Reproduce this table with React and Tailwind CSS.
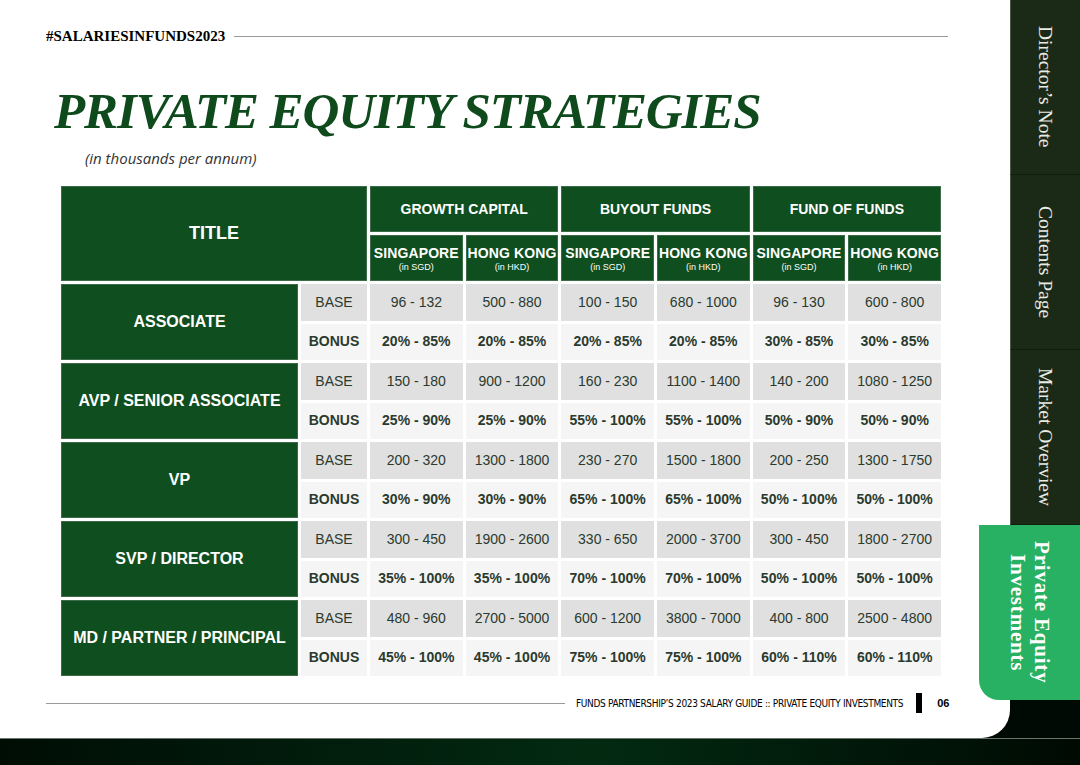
import React from "react";

const groups = [
  {
    name: "ASSOCIATE",
    base: ["96 - 132", "500 - 880", "100 - 150", "680 - 1000", "96 - 130", "600 - 800"],
    bonus: ["20% - 85%", "20% - 85%", "20% - 85%", "20% - 85%", "30% - 85%", "30% - 85%"],
  },
  {
    name: "AVP / SENIOR ASSOCIATE",
    base: ["150 - 180", "900 - 1200", "160 - 230", "1100 - 1400", "140 - 200", "1080 - 1250"],
    bonus: ["25% - 90%", "25% - 90%", "55% - 100%", "55% - 100%", "50% - 90%", "50% - 90%"],
  },
  {
    name: "VP",
    base: ["200 - 320", "1300 - 1800", "230 - 270", "1500 - 1800", "200 - 250", "1300 - 1750"],
    bonus: ["30% - 90%", "30% - 90%", "65% - 100%", "65% - 100%", "50% - 100%", "50% - 100%"],
  },
  {
    name: "SVP / DIRECTOR",
    base: ["300 - 450", "1900 - 2600", "330 - 650", "2000 - 3700", "300 - 450", "1800 - 2700"],
    bonus: ["35% - 100%", "35% - 100%", "70% - 100%", "70% - 100%", "50% - 100%", "50% - 100%"],
  },
  {
    name: "MD / PARTNER / PRINCIPAL",
    base: ["480 - 960", "2700 - 5000", "600 - 1200", "3800 - 7000", "400 - 800", "2500 - 4800"],
    bonus: ["45% - 100%", "45% - 100%", "75% - 100%", "75% - 100%", "60% - 110%", "60% - 110%"],
  },
];

const funds = ["GROWTH CAPITAL", "BUYOUT FUNDS", "FUND OF FUNDS"];

const green = "bg-[#0f4e1e] text-white font-bold flex items-center justify-center text-center border border-[#3c6c47]";

function SubHead({ city, cur }) {
  return (
    <div className={green + " flex-col leading-none"}>
      <span className="text-[14px] tracking-[0.1px] mt-[2px]">{city}</span>
      <span className="text-[9px] font-normal mt-[3px]">{cur}</span>
    </div>
  );
}

function Table() {
  return (
    <div
      className="ml-[15px] mt-[18px] w-[880px] grid grid-cols-[237px_66px_repeat(6,minmax(0,1fr))] grid-rows-[46px_46px_repeat(10,36.5px)] gap-[3px] text-[#2b3a2e]"
      style={{ fontFamily: '"Liberation Sans", Arial, sans-serif' }}
    >
      <div className={green + " col-span-2 row-span-2 text-[18px]"}>TITLE</div>
      {funds.map((f) => (
        <div key={f} className={green + " col-span-2 text-[14px]"}>
          {f}
        </div>
      ))}
      {funds.map((f) => (
        <React.Fragment key={f + "s"}>
          <SubHead city="SINGAPORE" cur="(in SGD)" />
          <SubHead city="HONG KONG" cur="(in HKD)" />
        </React.Fragment>
      ))}
      {groups.map((g) => (
        <React.Fragment key={g.name}>
          <div className={green + " row-span-2 text-[16px]"}>{g.name}</div>
          <div className="bg-[#e0e0e0] flex items-center justify-center text-[14px]">BASE</div>
          {g.base.map((v, i) => (
            <div key={"b" + i} className="bg-[#e0e0e0] flex items-center justify-center text-[14px]">
              {v}
            </div>
          ))}
          <div className="bg-[#f5f5f5] flex items-center justify-center text-[14px] font-bold">BONUS</div>
          {g.bonus.map((v, i) => (
            <div key={"n" + i} className="bg-[#f5f5f5] flex items-center justify-center text-[14px] font-bold">
              {v}
            </div>
          ))}
        </React.Fragment>
      ))}
    </div>
  );
}

function Tab({ children }) {
  return (
    <div className="h-[175px] shrink-0 bg-[#1b2a17] border-b border-[#121d10] border-l border-l-[#4b5a48] flex items-center justify-center">
      <span
        className="[writing-mode:vertical-rl] text-[19.5px] text-[#e8ebe6] leading-none"
        style={{ fontFamily: '"Liberation Serif", "Times New Roman", serif' }}
      >
        {children}
      </span>
    </div>
  );
}

export default function App() {
  return (
    <div className="w-[1080px] h-[765px] bg-[#000a04] flex flex-col overflow-hidden">
      <div className="flex h-[738px] shrink-0">
        <main className="w-[1010px] shrink-0 bg-white rounded-br-[28px] flex flex-col pl-[46px] pr-[62px] pt-[28px]">
          <div className="flex items-center gap-[9px]">
            <span
              className="text-[15px] font-bold text-black leading-[17px] whitespace-nowrap"
              style={{ fontFamily: '"Liberation Serif", "Times New Roman", serif' }}
            >
              #SALARIESINFUNDS2023
            </span>
            <div className="flex-1 h-px bg-[#9a9a9a]" />
          </div>
          <h1
            className="ml-[8px] mt-[41px] text-[51px] leading-[50px] font-bold italic text-[#0f4a1d] tracking-[-1.1px] whitespace-nowrap"
            style={{ fontFamily: '"Liberation Serif", "Times New Roman", serif' }}
          >
            PRIVATE EQUITY STRATEGIES
          </h1>
          <p
            className="ml-[39px] mt-[12px] text-[15px] leading-[20px] italic text-[#333]"
            style={{ fontFamily: '"Open Sans", sans-serif' }}
          >
            (in thousands per annum)
          </p>
          <Table />
          <div className="mt-auto mb-[25px] h-[20px] flex items-center">
            <div className="w-[519px] shrink-0 h-px bg-[#9a9a9a]" />
            <span
              className="ml-[11px] shrink-0 text-[10px] text-black whitespace-nowrap tracking-[-0.33px]"
              style={{ fontFamily: '"Liberation Sans Narrow", "DejaVu Sans Condensed", "Liberation Sans", sans-serif', fontStretch: "condensed" }}
            >
              FUNDS PARTNERSHIP’S 2023 SALARY GUIDE :: PRIVATE EQUITY INVESTMENTS
            </span>
            <div className="ml-[13px] shrink-0 w-[6px] h-[20px] bg-black" />
            <span
              className="ml-[15px] text-[11px] font-bold text-black"
              style={{ fontFamily: '"Liberation Sans", sans-serif' }}
            >
              06
            </span>
          </div>
        </main>
        <nav className="w-[70px] shrink-0 flex flex-col">
          <Tab>Director’s Note</Tab>
          <Tab>Contents Page</Tab>
          <Tab>Market Overview</Tab>
          <div className="-ml-[31px] w-[101px] h-[175px] shrink-0 bg-[#28b163] rounded-bl-[20px] flex items-center justify-center">
            <span
              className="[writing-mode:vertical-rl] text-[21px] font-bold text-white leading-[24px] text-center tracking-[0.8px]"
              style={{ fontFamily: '"Liberation Serif", "Times New Roman", serif' }}
            >
              Private Equity
              <br />
              Investments
            </span>
          </div>
        </nav>
      </div>
      <div className="flex-1 bg-[linear-gradient(90deg,#000d05_0%,#022a11_55%,#000a03_100%)] border-t border-[#6b746d]" />
    </div>
  );
}
